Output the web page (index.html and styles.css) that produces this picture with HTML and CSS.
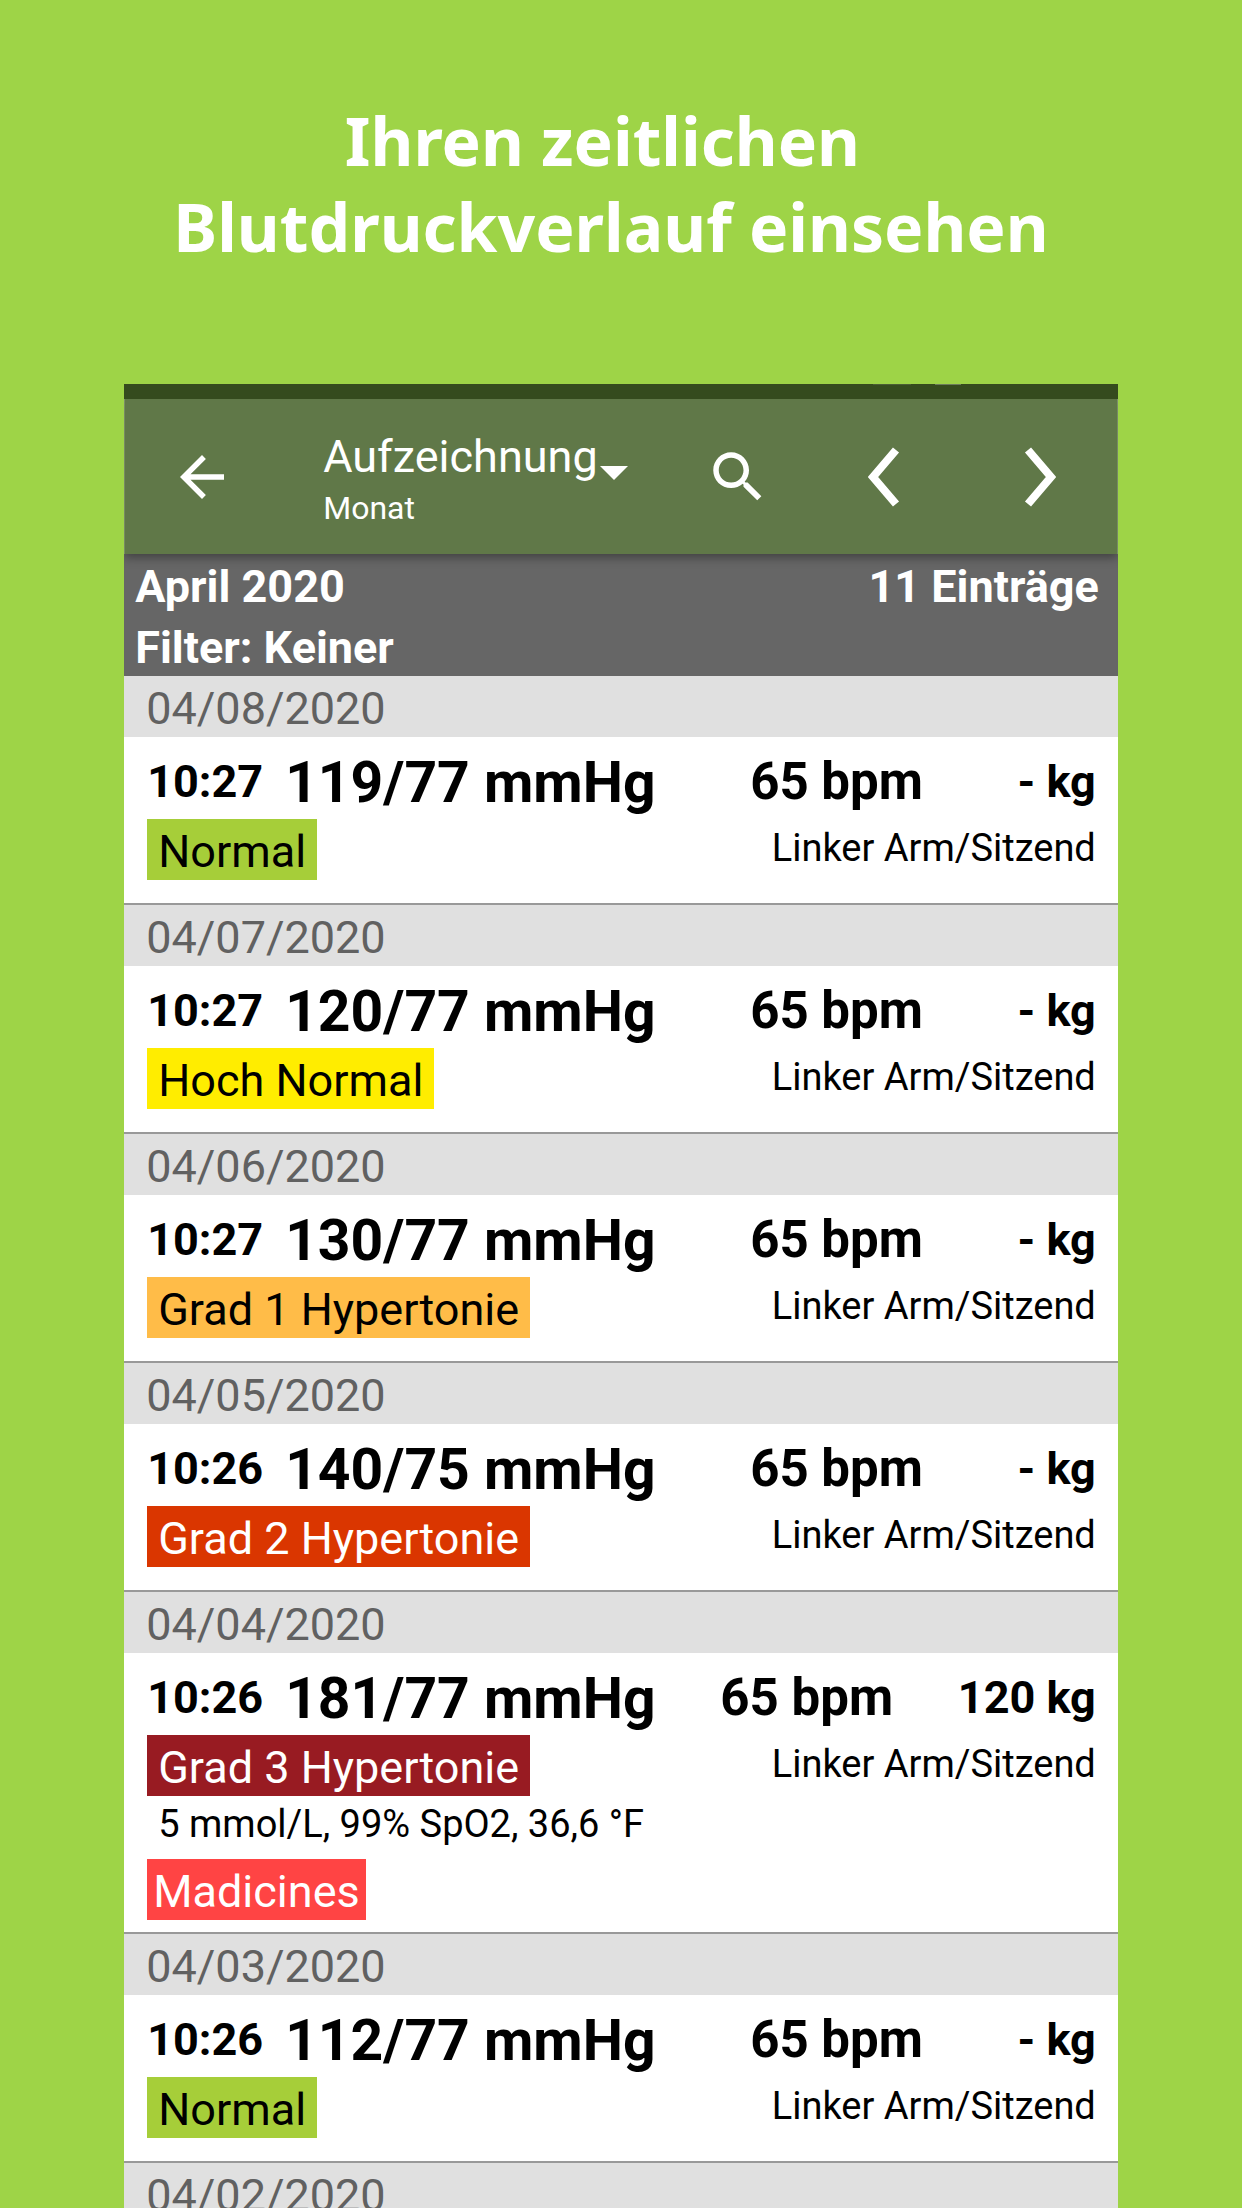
FILE: index.html
```html
<!DOCTYPE html>
<html lang="de">
<head>
    <meta charset="UTF-8">
    <meta name="viewport" content="width=device-width, initial-scale=1.0">
    <title>Blutdruck - Aufzeichnung</title>
    <link rel="stylesheet" href="styles.css">
</head>
<body>
    <div class="promo">
        <h1 class="headline">Ihren zeitlichen&nbsp;<br>Blutdruckverlauf einsehen</h1>

        <div class="phone">
            <div class="status-bar">
                <span class="status-mark dim"></span>
                <span class="status-mark"></span>
            </div>

            <header class="toolbar">
                <button class="icon-btn" aria-label="Zurück">
                    <svg class="icon" viewBox="0 0 24 24"><path d="M20 11H7.83l5.59-5.59L12 4l-8 8 8 8 1.41-1.41L7.83 13H20v-2z"/></svg>
                </button>
                <button class="view-picker" aria-haspopup="listbox">
                    <span class="view-title">Aufzeichnung<svg class="caret" viewBox="0 0 10 5"><path d="M0 0l5 5 5-5z"/></svg></span>
                    <span class="view-range">Monat</span>
                </button>
                <button class="icon-btn search" aria-label="Suchen">
                    <svg class="icon" viewBox="0 0 24 24"><path d="M15.5 14h-.79l-.28-.27C15.41 12.59 16 11.11 16 9.5 16 5.91 13.09 3 9.5 3S3 5.91 3 9.5 5.91 16 9.5 16c1.61 0 3.09-.59 4.23-1.57l.27.28v.79l5 4.99L20.49 19l-4.99-5zm-6 0C7.01 14 5 11.99 5 9.5S7.01 5 9.5 5 14 7.01 14 9.5 11.99 14 9.5 14z"/></svg>
                </button>
                <button class="icon-btn" aria-label="Vorheriger Monat">
                    <svg class="chevron" viewBox="0 0 32 60"><path d="M28 3L5 30l23 27"/></svg>
                </button>
                <button class="icon-btn" aria-label="Nächster Monat">
                    <svg class="chevron" viewBox="0 0 32 60"><path d="M4 3l23 27L4 57"/></svg>
                </button>
            </header>

            <div class="summary">
                <div class="summary-row"><span>April 2020</span><span>11 Einträge</span></div>
                <div class="summary-row"><span>Filter: Keiner</span></div>
            </div>

            <main>
                <section class="day">
                    <h2 class="date">04/08/2020</h2>
                    <div class="entry">
                        <div class="values">
                            <span class="time">10:27</span>
                            <span class="pressure">119/77 mmHg</span>
                            <span class="pulse">65 bpm</span>
                            <span class="weight">- kg</span>
                        </div>
                        <div class="details">
                            <span class="tag normal">Normal</span>
                            <span class="position">Linker Arm/Sitzend</span>
                        </div>
                    </div>
                </section>

                <section class="day">
                    <h2 class="date">04/07/2020</h2>
                    <div class="entry">
                        <div class="values">
                            <span class="time">10:27</span>
                            <span class="pressure">120/77 mmHg</span>
                            <span class="pulse">65 bpm</span>
                            <span class="weight">- kg</span>
                        </div>
                        <div class="details">
                            <span class="tag high-normal">Hoch Normal</span>
                            <span class="position">Linker Arm/Sitzend</span>
                        </div>
                    </div>
                </section>

                <section class="day">
                    <h2 class="date">04/06/2020</h2>
                    <div class="entry">
                        <div class="values">
                            <span class="time">10:27</span>
                            <span class="pressure">130/77 mmHg</span>
                            <span class="pulse">65 bpm</span>
                            <span class="weight">- kg</span>
                        </div>
                        <div class="details">
                            <span class="tag grade1">Grad 1 Hypertonie</span>
                            <span class="position">Linker Arm/Sitzend</span>
                        </div>
                    </div>
                </section>

                <section class="day">
                    <h2 class="date">04/05/2020</h2>
                    <div class="entry">
                        <div class="values">
                            <span class="time">10:26</span>
                            <span class="pressure">140/75 mmHg</span>
                            <span class="pulse">65 bpm</span>
                            <span class="weight">- kg</span>
                        </div>
                        <div class="details">
                            <span class="tag grade2">Grad 2 Hypertonie</span>
                            <span class="position">Linker Arm/Sitzend</span>
                        </div>
                    </div>
                </section>

                <section class="day">
                    <h2 class="date">04/04/2020</h2>
                    <div class="entry with-notes">
                        <div class="values">
                            <span class="time">10:26</span>
                            <span class="pressure">181/77 mmHg</span>
                            <span class="pulse">65 bpm</span>
                            <span class="weight">120 kg</span>
                        </div>
                        <div class="details">
                            <span class="tag grade3">Grad 3 Hypertonie</span>
                            <span class="position">Linker Arm/Sitzend</span>
                        </div>
                        <p class="extra">5 mmol/L, 99% SpO2, 36,6 °F</p>
                        <div class="details">
                            <span class="tag medicine">Madicines</span>
                        </div>
                    </div>
                </section>

                <section class="day">
                    <h2 class="date">04/03/2020</h2>
                    <div class="entry">
                        <div class="values">
                            <span class="time">10:26</span>
                            <span class="pressure">112/77 mmHg</span>
                            <span class="pulse">65 bpm</span>
                            <span class="weight">- kg</span>
                        </div>
                        <div class="details">
                            <span class="tag normal">Normal</span>
                            <span class="position">Linker Arm/Sitzend</span>
                        </div>
                    </div>
                </section>

                <section class="day">
                    <h2 class="date">04/02/2020</h2>
                </section>
            </main>
        </div>
    </div>
</body>
</html>
```
FILE: styles.css
```css
:root {
    --page: #9ed447;
    --toolbar: #607848;
    --status: #354b1e;
    --summary: #666666;
    --date-bg: #e0e0e0;
    --date-text: #616161;
    --divider: #999999;
}

* {
    box-sizing: border-box;
}

body {
    margin: 0;
    background: var(--page);
    font-family: Roboto, "Liberation Sans", sans-serif;
    font-size: 45px;
    color: #000;
}

.promo {
    height: 100vh;
    overflow: hidden;
}

.headline {
    margin: 0;
    padding: 97px 20px 115px 0;
    font-family: "Noto Sans", "Open Sans", sans-serif;
    font-size: 66px;
    line-height: 86px;
    font-weight: 700;
    text-align: center;
    color: #fff;
}

.phone {
    width: 80%;
    margin: 0 auto;
    background: #fff;
}

.status-bar {
    display: flex;
    justify-content: flex-end;
    gap: 24px;
    height: 15px;
    padding-right: 157px;
    background: var(--status);
}

.status-mark {
    width: 26px;
    height: 1px;
    background: #6b7c5b;
}

.status-mark.dim {
    width: 38px;
    background: #4a5e35;
}

/* toolbar */
.toolbar {
    position: relative;
    display: flex;
    align-items: center;
    height: 155px;
    background: var(--toolbar);
    box-shadow: 0 3px 10px rgba(0, 0, 0, 0.4);
    clip-path: inset(0 0 -16px 0);
}

.toolbar button {
    border: none;
    padding: 0;
    background: none;
    color: #fff;
    font-family: inherit;
    cursor: pointer;
}

.icon-btn {
    flex: none;
    display: flex;
    align-items: center;
    justify-content: center;
    width: 156px;
    height: 100%;
}

.icon-btn.search {
    width: 136px;
}

.icon {
    width: 66px;
    height: 66px;
    fill: #fff;
}

.chevron {
    width: 32px;
    height: 60px;
    fill: none;
    stroke: #fff;
    stroke-width: 8;
}

.view-picker {
    flex: 1;
    display: flex;
    flex-direction: column;
    align-items: flex-start;
}

.toolbar .view-picker {
    padding: 6px 0 0 43px;
}

.view-title {
    display: flex;
    align-items: flex-end;
    gap: 2px;
    font-size: 45px;
    line-height: 56px;
}

.caret {
    width: 28px;
    height: 14px;
    margin-bottom: 5px;
    fill: #fff;
}

.view-range {
    font-size: 32px;
    line-height: 46px;
}

/* month summary */
.summary {
    background: var(--summary);
    color: #fff;
    font-weight: 700;
    padding: 0 19px 0 11px;
}

.summary-row {
    display: flex;
    justify-content: space-between;
    padding-top: 4px;
    line-height: 57px;
}

/* list */
.date {
    margin: 0;
    padding: 4px 22px 0;
    background: var(--date-bg);
    color: var(--date-text);
    font-size: 45px;
    line-height: 57px;
    font-weight: 400;
}

.entry {
    padding: 9px 22px 23px 23px;
    border-bottom: 2px solid var(--divider);
}

.entry.with-notes {
    padding-bottom: 12px;
}

.values {
    display: flex;
    align-items: center;
    padding-bottom: 2px;
    font-weight: 700;
    white-space: nowrap;
}

.pressure {
    margin-left: 22px;
    padding-top: 3px;
    font-size: 57px;
    line-height: 68px;
}

.pulse {
    flex: 1;
    text-align: center;
    font-size: 51px;
}

.details {
    display: flex;
    justify-content: space-between;
    align-items: flex-start;
}

.tag {
    padding: 4px 11px 0;
    line-height: 57px;
}

.position {
    font-size: 38px;
    line-height: 59px;
}

.extra {
    margin: 0 0 6px;
    padding-left: 11px;
    font-size: 38px;
    line-height: 57px;
}

.normal {
    background: #a6ce39;
}

.high-normal {
    background: #ffed00;
}

.grade1 {
    background: #ffbc48;
}

.grade2 {
    background: #da3600;
    color: #fff;
}

.grade3 {
    background: #981b22;
    color: #fff;
}

.medicine {
    padding: 4px 6px 0;
    background: #ff4444;
    color: #fff;
}
```
